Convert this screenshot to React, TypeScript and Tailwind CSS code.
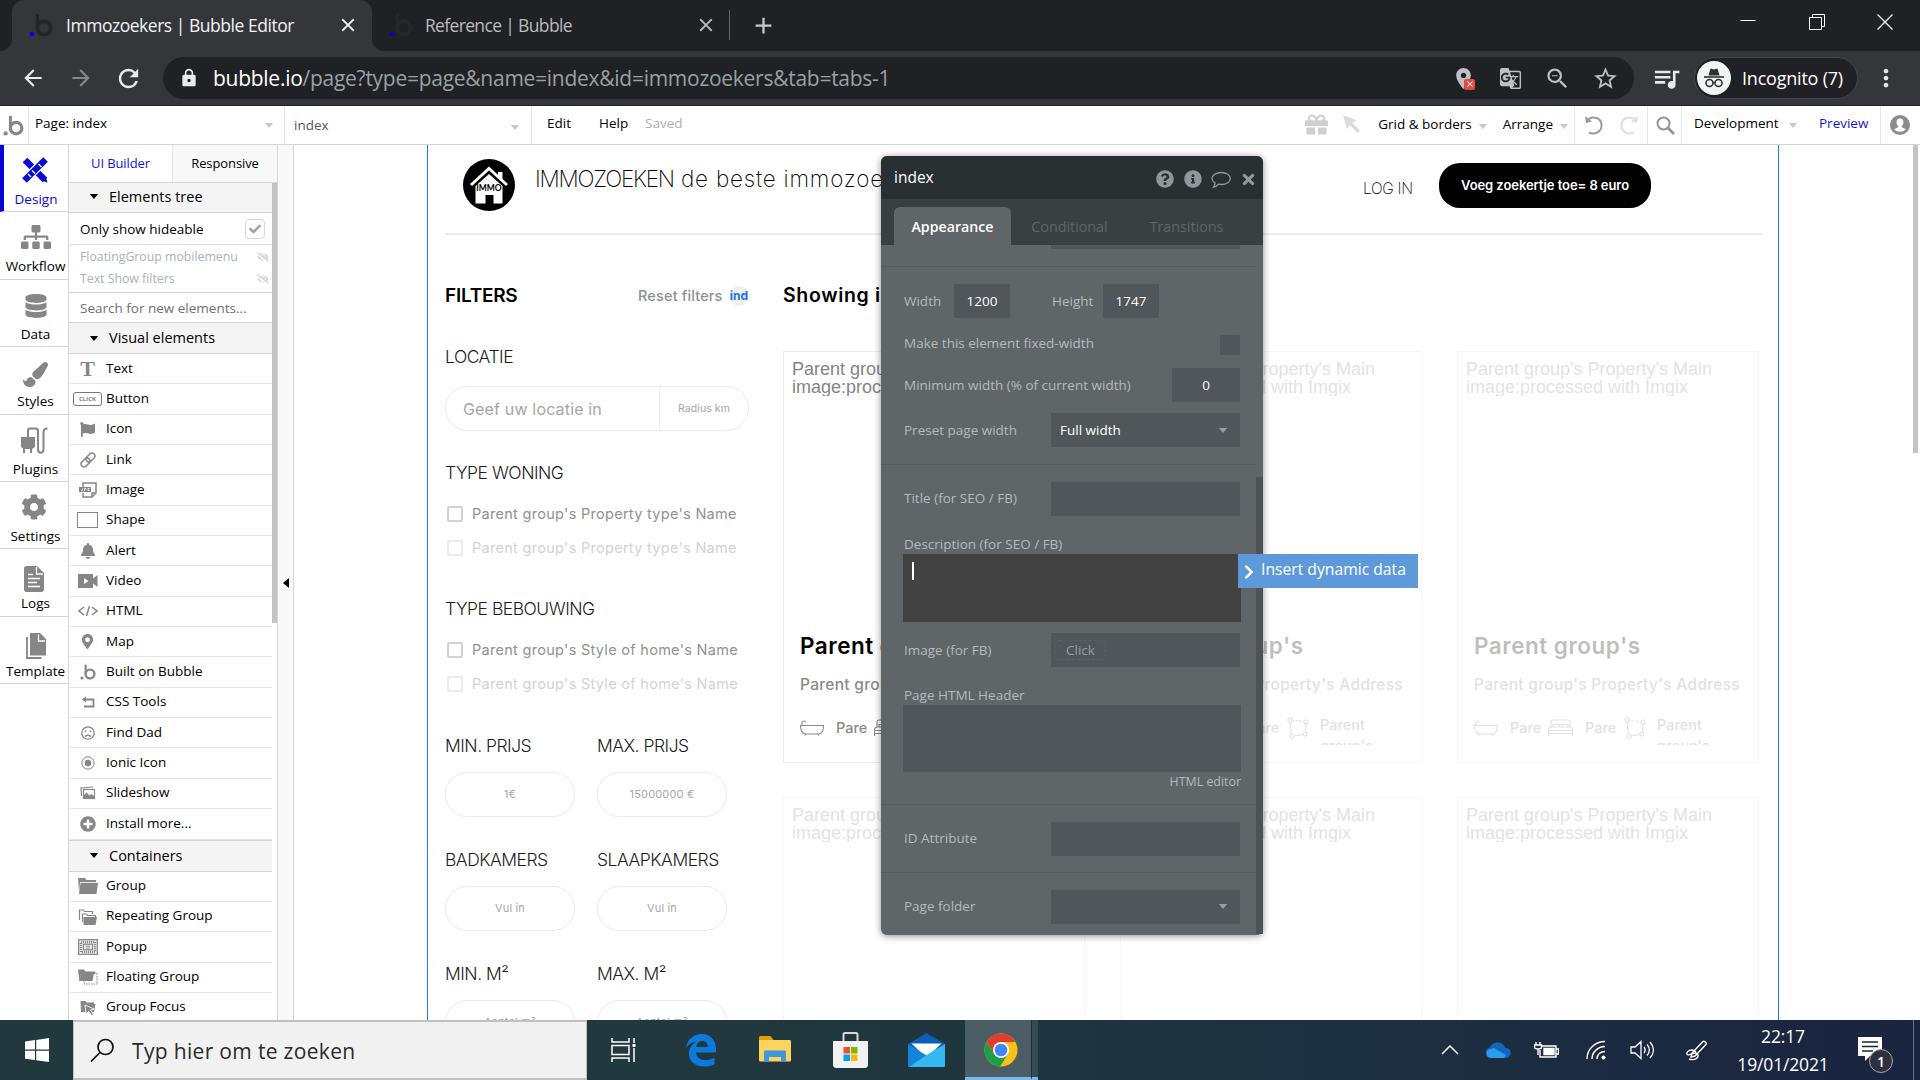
import type { ReactNode } from "react";
import { clsx } from "clsx";
import {
  FaBell,
  FaCheck,
  FaChevronRight,
  FaCog,
  FaDatabase,
  FaEyeSlash,
  FaFlag,
  FaGift,
  FaInfoCircle,
  FaMapMarkerAlt,
  FaPaintBrush,
  FaPlusCircle,
  FaQuestionCircle,
  FaSitemap,
  FaTimes,
} from "react-icons/fa";
import {
  MdAdd,
  MdArrowBack,
  MdArrowForward,
  MdClose,
  MdGTranslate,
  MdLocationOn,
  MdLock,
  MdMoreVert,
  MdOutlineZoomOut,
  MdQueueMusic,
  MdRefresh,
  MdStarBorder,
} from "react-icons/md";

function BubbleLogo({ className, dot = "currentColor" }: { className?: string; dot?: string }) {
  return (
    <svg viewBox="0 0 24 24" className={className} fill="none">
      <path d="M8.5 1v14" stroke="currentColor" strokeWidth="3.2" />
      <circle cx="15" cy="15" r="6.6" stroke="currentColor" strokeWidth="3.6" />
      <circle cx="3" cy="21" r="2.4" fill={dot} />
    </svg>
  );
}

function Caret({ className }: { className?: string }) {
  return (
    <svg viewBox="0 0 10 6" className={clsx("shrink-0", className)} fill="currentColor">
      <path d="M0 0h10L5 6z" />
    </svg>
  );
}

/* ---------- Browser ---------- */

function TabStrip() {
  return (
    <div className="flex h-[51px] bg-[#202124]">
      <div className="flex w-3 items-end bg-[#35363a]">
        <div className="h-full w-3 rounded-br-xl bg-[#202124]" />
      </div>
      <div className="flex w-[360px] items-center rounded-t-xl bg-[#35363a] pb-px pl-[17px] text-[#f1f3f4]">
        <BubbleLogo className="size-6 text-[#242424]" dot="#0000ff" />
        <span className="ml-[13px] w-[264px] whitespace-nowrap text-[17.5px] tracking-[-0.47px]">
          Immozoekers | Bubble Editor
        </span>
        <MdClose className="ml-[7px] size-[22px]" />
      </div>
      <div className="w-3 bg-[#35363a]">
        <div className="h-full rounded-bl-xl bg-[#202124]" />
      </div>
      <div className="flex w-[346px] items-center pb-px pl-[5px] text-[#b8bbbf]">
        <BubbleLogo className="size-6 text-[#26272b]" dot="#0000c8" />
        <span className="ml-3 w-[264px] whitespace-nowrap text-[17.5px] tracking-[-0.65px]">
          Reference | Bubble
        </span>
        <MdClose className="ml-[7px] size-[22px]" />
        <span className="ml-3 h-[30px] w-px bg-[#5f6368]" />
      </div>
      <div className="flex flex-1 items-center pb-px pl-[20px] text-[#c8cbce]">
        <MdAdd className="size-[27px]" />
      </div>
      <div className="flex w-[180px] items-start justify-between pr-[27px] text-white">
        <svg viewBox="0 0 16 16" className="mt-3 size-4" stroke="currentColor" fill="none">
          <path d="M0.500 8.500h15" />
        </svg>
        <svg viewBox="0 0 16 16" className="mt-3.5 size-4" stroke="currentColor" fill="none">
          <path d="M.5 3.500h12v12H.5zM3.500 3.500v-3h12v12h-3" />
        </svg>
        <svg viewBox="0 0 16 16" className="mt-3.5 size-4" stroke="currentColor" fill="none">
          <path d="M.5.5l15 15M15.500.5l-15 15" strokeWidth="1.2" />
        </svg>
      </div>
    </div>
  );
}

function IncognitoBadge() {
  return (
    <svg viewBox="0 0 34 34" className="size-[34px]">
      <circle cx="17" cy="17" r="17" fill="#f1f3f4" />
      <path d="M11.500 14.500l2-7 3.500 1 3.500-1 2 7z" fill="#303134" />
      <path d="M7 16h20" stroke="#303134" strokeWidth="1.600" />
      <g fill="none" stroke="#303134" strokeWidth="1.600">
        <circle cx="12.500" cy="22" r="3.500" />
        <circle cx="21.500" cy="22" r="3.500" />
        <path d="M16 21.500h2" />
      </g>
    </svg>
  );
}

function AddressBar() {
  return (
    <div className="flex h-[55px] items-center border-b border-[#202124] bg-[#35363a] text-[#e8eaed]">
      <MdArrowBack className="ml-5 size-[26px]" />
      <MdArrowForward className="ml-[22px] size-[26px] text-[#85878a]" />
      <MdRefresh className="ml-[20px] size-[29px]" />
      <div className="ml-5 flex h-[42px] w-[1471px] items-center rounded-full bg-[#202124] pl-4 text-[#bdc1c6]">
        <MdLock className="size-5 text-[#e8eaed]" />
        <span className="ml-3.5 flex-1 pt-0.5 whitespace-nowrap text-[21px] tracking-[-0.27px] text-[#9aa0a6]">
          <span className="text-white">bubble.io</span>
          /page?type=page&amp;name=index&amp;id=immozoekers&amp;tab=tabs-1
        </span>
        <div className="relative">
          <MdLocationOn className="size-[25px]" />
          <span className="absolute top-[13px] left-[13px] flex size-[11px] items-center justify-center rounded-[2px] bg-[#e04a3f]">
            <MdClose className="size-2.5 text-white" />
          </span>
        </div>
        <MdGTranslate className="ml-[23px] size-[23px]" />
        <MdOutlineZoomOut className="ml-[22px] size-[27px]" />
        <MdStarBorder className="mr-[15px] ml-[21px] size-[27px]" />
      </div>
      <MdQueueMusic className="ml-[17px] size-[31px]" />
      <div className="ml-[12px] flex h-[42px] w-[164px] items-center rounded-full border border-[#44464a] bg-[#202124] pl-[2px]">
        <IncognitoBadge />
        <span className="ml-[11px] text-[18px] tracking-[-0.21px] whitespace-nowrap text-white">Incognito (7)</span>
      </div>
      <MdMoreVert className="ml-[14px] size-[28px]" />
    </div>
  );
}

/* ---------- Editor top bar ---------- */

function CurvedArrow({ flip, className }: { flip?: boolean; className?: string }) {
  return (
    <svg viewBox="0 0 18 20" className={clsx("h-5 w-[18px]", flip && "-scale-x-100", className)} fill="none">
      <path d="M3 4.500C8 .5 16.500 2.500 16.500 10.500c0 7-7.500 9.500-12.500 7" stroke="currentColor" strokeWidth="2" />
      <path d="M0 1l1 7 6-1.500z" fill="currentColor" />
    </svg>
  );
}

function EditorBar() {
  return (
    <div className="flex h-[39px] items-stretch border-b border-[#d4d4d4] bg-white text-[13.5px] text-black">
      <div className="flex w-7 items-center pl-[3px] text-[#868686]">
        <BubbleLogo className="size-[21px]" />
      </div>
      <div className="flex w-[257px] items-center justify-between border-x border-[#e4e7ea] pr-2.5 pb-[3px] pl-1.5">
        Page: index
        <Caret className="mt-1 h-[5px] w-2.5 text-[#c3ccd0]" />
      </div>
      <div className="flex w-[246px] items-center justify-between pt-px pr-[11px] pl-[9px] text-[#555]">
        index
        <Caret className="mt-1 h-[5px] w-2.5 text-[#c3ccd0]" />
      </div>
      <div className="flex flex-1 items-center border-l border-[#e4e7ea] pb-[3px] pl-[15px]">
        <span className="w-[52px]">Edit</span>
        <span className="w-[46px]">Help</span>
        <span className="text-[#b0b0b0]">Saved</span>
      </div>
      <div className="flex items-center pb-0.5">
        <FaGift className="mt-px mr-[15px] size-[23px] text-[#cfcfcf]" />
        <svg viewBox="0 0 17 18" className="mr-[18px] h-[18px] w-[17px] text-[#dadada]" fill="currentColor">
          <path d="M0 0l14 5.500-5 2 8 8-2.500 2.500-8-8-2.500 4.500z" />
        </svg>
        <span className="whitespace-nowrap">Grid &amp; borders</span>
        <Caret className="mt-1 mr-[15px] ml-[6px] h-[5px] w-2.5 text-[#c3ccd0]" />
        <span>Arrange</span>
        <Caret className="mt-1 ml-[6px] h-[5px] w-2.5 text-[#c3ccd0]" />
      </div>
      <div className="ml-[5px] flex w-[74px] items-center gap-[17px] border-x border-[#e4e7ea] pl-2.5">
        <CurvedArrow className="text-[#9b9b9b]" />
        <CurvedArrow flip className="text-[#dedede]" />
      </div>
      <div className="flex w-[34px] items-center justify-center border-r border-[#e4e7ea] pl-0.5">
        <svg viewBox="0 0 19 19" className="size-[19px] text-[#929292]" fill="none" stroke="currentColor">
          <circle cx="7.500" cy="7.500" r="6" strokeWidth="2" />
          <path d="M12 12l6 6" strokeWidth="2.600" />
        </svg>
      </div>
      <div className="flex w-[199px] items-center border-r border-[#e4e7ea] pb-[3px] pl-3">
        <span className="w-[94px]">Development</span>
        <Caret className="mt-1 mr-[21px] h-[5px] w-2.5 text-[#c3ccd0]" />
        <span className="text-[#1414d2]">Preview</span>
      </div>
      <div className="flex w-[39px] items-center pl-[9px]">
        <svg viewBox="0 0 20 20" className="size-5">
          <circle cx="10" cy="10" r="10" fill="#8c8c8c" />
          <path d="M10 3.500c2.200 0 3.500 1.600 3.500 3.800 0 1.700-.8 3-1.600 3.700v1.200l4 2a8 8 0 0 1-11.800 0l4-2V11c-.9-.7-1.600-2-1.600-3.700 0-2.200 1.300-3.800 3.500-3.800z" fill="#fff" />
        </svg>
      </div>
    </div>
  );
}

/* ---------- Left navigation ---------- */

const navItems: { label: string; offset: string; icon: ReactNode }[] = [
  {
    label: "Design",
    offset: "pt-[10px]",
    icon: (
      <svg viewBox="0 0 26 26" className="mr-[3px] size-[26px]" fill="none">
        <path d="M3 3l20 20" stroke="currentColor" strokeWidth="6.500" />
        <path d="M3 23L23 3" stroke="#fff" strokeWidth="9" />
        <path d="M2.500 23.500l21-21" stroke="currentColor" strokeWidth="6.500" />
        <path d="M6 17l3 3M10 13.500l3 3M16.500 7l3 3" stroke="#fff" strokeWidth="1.300" />
        <path d="M17 15.500l7 5 1.500 5-5-1.500-6-6z" fill="currentColor" />
      </svg>
    ),
  },
  { label: "Workflow", offset: "pt-[10px]", icon: <FaSitemap className="size-[30px]" /> },
  { label: "Data", offset: "pt-[11px]", icon: <FaDatabase className="size-6" /> },
  { label: "Styles", offset: "pt-[12px]", icon: <FaPaintBrush className="size-[25px]" /> },
  {
    label: "Plugins",
    offset: "pt-[11px]",
    icon: (
      <svg viewBox="0 0 28 28" className="mr-1 size-7" fill="none">
        <path d="M1 10h14v10l-3 2H4l-3-2z" fill="currentColor" />
        <path d="M4 21v5M11 21v5M8 10V3.500C8 2 9 1.500 10 1.500h5.500c1.500 0 2.500 1 2.500 2.500v18c0 5 5.500 5 5.500 0V5c0-2 1-3.500 4-3.500" stroke="currentColor" strokeWidth="2" />
      </svg>
    ),
  },
  { label: "Settings", offset: "pt-[10px]", icon: <FaCog className="mr-[3px] size-[26px]" /> },
  {
    label: "Logs",
    offset: "pt-[15px]",
    icon: (
      <svg viewBox="0 0 20 26" className="mr-1 h-[26px] w-5">
        <path d="M0 2.500C0 1 1 0 2.500 0H13l7 7v16.500c0 1.500-1 2.500-2.500 2.500h-15C1 26 0 25 0 23.500z" fill="currentColor" />
        <path d="M12.500 1v7H19M4 8.500h5M4 12.500h12M4 16.500h9M4 20.500h12" stroke="#fff" strokeWidth="1.300" fill="none" />
      </svg>
    ),
  },
  {
    label: "Template",
    offset: "pt-[14px]",
    icon: (
      <svg viewBox="0 0 20 26" className="h-[26px] w-5">
        <path d="M4 0h10l6 6v16.500H4z" fill="currentColor" />
        <path d="M1 4v21h14.500" stroke="currentColor" strokeWidth="1.800" fill="none" />
        <path d="M12.500 1.500V8H19" stroke="#fff" strokeWidth="1.300" fill="none" />
      </svg>
    ),
  },
];

function MainNav() {
  return (
    <div className="flex w-[69px] flex-col border-r border-[#d6d6d6] bg-white">
      {navItems.map((item, i) => (
        <div
          key={item.label}
          className={clsx(
            "flex h-[67.4px] flex-col items-center border-b border-[#d6d6d6] text-[13.500px] whitespace-nowrap",
            i === 0 ? "border-l-4 border-l-[#0606d6] text-[#0b0bd6]" : "pl-[3px] text-black",
          )}
        >
          <div className={clsx("flex h-[44px] flex-col", item.offset, i > 0 && "text-[#868686]")}>
            <div className="flex h-[30px] shrink-0 items-center">{item.icon}</div>
          </div>
          <span className="leading-5">{item.label}</span>
        </div>
      ))}
    </div>
  );
}

/* ---------- Element palette ---------- */

function Glyph({ children }: { children: ReactNode }) {
  return (
    <svg viewBox="0 0 20 18" className="h-[18px] w-5" fill="none" stroke="currentColor" strokeWidth="1.500">
      {children}
    </svg>
  );
}

const visualElements: { label: string; icon: ReactNode }[] = [
  { label: "Text", icon: <span className="font-['Liberation_Serif',serif] text-[22px] leading-none font-bold">T</span> },
  {
    label: "Button",
    icon: (
      <span className="flex h-3.5 w-[29px] items-center justify-center rounded-[3px] border border-[#777] text-[6px] font-bold">
        CLICK
      </span>
    ),
  },
  { label: "Icon", icon: <FaFlag className="size-[15px]" /> },
  {
    label: "Link",
    icon: (
      <Glyph>
        <g transform="rotate(-45 10 9)">
          <rect x="1.500" y="6" width="10" height="6" rx="3" />
          <rect x="8.500" y="6" width="10" height="6" rx="3" />
        </g>
      </Glyph>
    ),
  },
  {
    label: "Image",
    icon: (
      <Glyph>
        <path d="M5 6V2h13v10l-4 4H5v-4" />
        <path d="M14 16v-4h4" />
        <path d="M1 6h12v5H1z" fill="currentColor" stroke="none" />
        <path d="M3 9.500h1.500V7.500M6.500 10V7.500h1.500v1M10 7.500h1.500M10 7.500v2h1.500" stroke="#fff" strokeWidth=".8" />
      </Glyph>
    ),
  },
  { label: "Shape", icon: <span className="h-4 w-[21px] border-[1.500px] border-[#868686]" /> },
  { label: "Alert", icon: <FaBell className="size-4" /> },
  {
    label: "Video",
    icon: (
      <Glyph>
        <path d="M0 2h15v4.500L19.500 3v12L15 11.500V16H0z" fill="currentColor" stroke="none" />
        <path d="M6 6v6l4.500-3z" fill="#fff" stroke="none" />
      </Glyph>
    ),
  },
  {
    label: "HTML",
    icon: (
      <Glyph>
        <path d="M6 5L1 9l5 4M14 5l5 4-5 4M11.500 4l-3 10" />
      </Glyph>
    ),
  },
  { label: "Map", icon: <FaMapMarkerAlt className="size-[15px]" /> },
  { label: "Built on Bubble", icon: <BubbleLogo className="size-4" /> },
  {
    label: "CSS Tools",
    icon: (
      <Glyph>
        <path d="M5 6.500h10.500v7H6" strokeWidth="1.800" />
        <path d="M4 6.500l4-3v6z" fill="currentColor" stroke="none" />
      </Glyph>
    ),
  },
  {
    label: "Find Dad",
    icon: (
      <Glyph>
        <circle cx="10" cy="9" r="6.200" strokeWidth="1.300" />
        <path d="M7.500 6.500v1.500M12.500 6.500v1.500M7 12.500c1.500-1.800 4.500-1.800 6 0" />
      </Glyph>
    ),
  },
  {
    label: "Ionic Icon",
    icon: (
      <Glyph>
        <circle cx="10" cy="9" r="6.200" strokeWidth="1" />
        <circle cx="10" cy="9" r="3.200" fill="currentColor" stroke="none" />
      </Glyph>
    ),
  },
  {
    label: "Slideshow",
    icon: (
      <Glyph>
        <path d="M3.500 12L3 4l12-1" strokeWidth="1.200" />
        <rect x="5.500" y="5.500" width="11" height="9" strokeWidth="1.200" />
        <path d="M5.500 14.500v-3l3-3 3 3 2-1.500 3 2.500v2z" fill="currentColor" stroke="none" />
      </Glyph>
    ),
  },
  { label: "Install more...", icon: <FaPlusCircle className="size-4" /> },
];

const containers: { label: string; icon: ReactNode }[] = [
  {
    label: "Group",
    icon: (
      <Glyph>
        <path d="M0 1h7l1.500 2H18v3H2L1 15z" fill="currentColor" stroke="none" />
        <path d="M2.500 6H20l-1.500 11H1z" fill="currentColor" stroke="none" />
        <path d="M2 5.500h16" stroke="#fff" strokeWidth=".8" />
      </Glyph>
    ),
  },
  {
    label: "Repeating Group",
    icon: (
      <Glyph>
        <path d="M1.500 12V2h4l1 1.500h8V6" strokeWidth="1.200" />
        <path d="M4.500 14V6h4l1 1.500h8V9" strokeWidth="1.200" />
        <path d="M5.500 9H19l-1.500 8h-12z" fill="currentColor" stroke="none" />
      </Glyph>
    ),
  },
  {
    label: "Popup",
    icon: (
      <Glyph>
        <rect x=".7" y="1.700" width="18.600" height="14.600" strokeWidth="1.300" />
        <rect x="3" y="4" width="14" height="10" strokeWidth="2.500" strokeDasharray="1.200 .8" />
        <rect x="5.500" y="6.200" width="9" height="5.600" strokeWidth="1.300" fill="#fff" />
        <path d="M7.500 8.200h5M7.500 10h5" strokeWidth="1" />
      </Glyph>
    ),
  },
  {
    label: "Floating Group",
    icon: (
      <Glyph>
        <path d="M0 1.500h6l1.500 2H17V6H3L1.500 14z" fill="currentColor" stroke="none" />
        <path d="M3 5h13l-1.500 8H1.500z" fill="currentColor" stroke="none" />
        <path d="M17 5h2v11H6v-2.500" strokeWidth="1" strokeDasharray="1.500 1" />
      </Glyph>
    ),
  },
  {
    label: "Group Focus",
    icon: (
      <Glyph>
        <path d="M2.500 2h5l1 1.500H16V5h1.500L16 13H3z" fill="currentColor" stroke="none" />
        <path d="M7 6l9 4-3.500 1 3 4.500-1.800 1.300-3-4.500L8 15z" fill="currentColor" stroke="#fff" strokeWidth=".9" />
      </Glyph>
    ),
  },
];

function SectionHeader({ children, className }: { children: ReactNode; className?: string }) {
  return (
    <div className={clsx("flex w-[203px] shrink-0 items-center border-b border-[#d6d6d6] bg-[#f4f4f4] pl-5 text-[14.5px]", className)}>
      <Caret className="h-[5px] w-2.5 text-black" />
      <span className="ml-2.5">{children}</span>
    </div>
  );
}

function PaletteRow({ label, icon }: { label: string; icon: ReactNode }) {
  return (
    <div className="flex h-[30.35px] w-[203px] shrink-0 items-center border-b border-[#e6e6e6]">
      <span className="flex w-[37px] shrink-0 items-center justify-center text-[#868686]">{icon}</span>
      <span className="pb-0.5 whitespace-nowrap">{label}</span>
    </div>
  );
}

function Palette() {
  return (
    <div className="flex w-[209px] flex-col overflow-hidden border-r border-[#d6d6d6] bg-white text-[13.500px] text-black">
      <div className="flex h-[38px] shrink-0 border-b border-[#d6d6d6] text-[13px] tracking-[-0.1px]">
        <div className="flex w-[103px] items-center justify-center text-[#1414d2]">UI Builder</div>
        <div className="flex flex-1 items-center justify-center border-l border-[#e6e6e6] bg-[#f8f8f8]">Responsive</div>
      </div>
      <div className="relative flex flex-1 flex-col">
        <SectionHeader className="h-[30px] pb-0.5">Elements tree</SectionHeader>
        <div className="flex h-8 w-[203px] shrink-0 items-center justify-between border-b border-[#e0e0e0] pt-px pr-[7px] pl-[11px]">
          Only show hideable
          <span className="flex size-5 items-center justify-center rounded border border-[#d6d6d6] text-[#9ba3a7]">
            <FaCheck className="size-3" />
          </span>
        </div>
        <div className="flex h-12 w-[203px] shrink-0 flex-col border-b border-[#d6d6d6] pt-[1px] pr-[3px] pl-[11px] text-[12.3px] text-[#a9b2b6]">
          {["FloatingGroup mobilemenu", "Text Show filters"].map((name) => (
            <div key={name} className="flex h-[22px] items-center justify-between">
              {name}
              <FaEyeSlash className="size-3 text-[#d2d2d2]" />
            </div>
          ))}
        </div>
        <div className="flex h-[30px] w-[203px] shrink-0 items-center border-b border-[#d6d6d6] pt-px pl-[11px] text-[#707070]">
          Search for new elements...
        </div>
        <SectionHeader className="h-[31px]">Visual elements</SectionHeader>
        {visualElements.map((el) => (
          <PaletteRow key={el.label} {...el} />
        ))}
        <SectionHeader className="h-8 border-t">Containers</SectionHeader>
        {containers.map((el) => (
          <PaletteRow key={el.label} {...el} />
        ))}
        <div className="absolute top-0 right-0 h-[440px] w-[5px] bg-[#c4c4c4]" />
      </div>
    </div>
  );
}

/* ---------- Page canvas ---------- */

function Heading({ children, className }: { children: ReactNode; className?: string }) {
  return (
    <div className={clsx("text-[17.500px] leading-6 font-light tracking-[-0.500px] whitespace-nowrap text-[#1c1c1c]", className)}>
      {children}
    </div>
  );
}

function CheckRow({ label, faded }: { label: string; faded?: boolean }) {
  return (
    <div className={clsx("flex h-[34px] items-center pl-0.5", faded && "opacity-40")}>
      <span className="size-4 shrink-0 rounded-[2px] border-2 border-[#d2d2d2]" />
      <span className="ml-[9px] text-[14.5px] tracking-[0.290px] whitespace-nowrap text-[#919191]">{label}</span>
    </div>
  );
}

function PillInput({ label, placeholder }: { label: string; placeholder: string }) {
  return (
    <div className="w-[152px]">
      <Heading>{label}</Heading>
      <div className="mt-[14px] flex h-[45px] w-[130px] items-center justify-center rounded-[22px] border border-[#ebebeb] text-[11px] tracking-[0.170px] text-[#a6a6a6]">
        {placeholder}
      </div>
    </div>
  );
}

function Filters() {
  return (
    <div className="w-[338px] shrink-0 pt-[47px]">
      <div className="flex h-[28px] items-center">
        <span className="w-[193px] text-[19px] font-semibold tracking-[-0.25px] text-black">FILTERS</span>
        <span className="w-[91px] text-[14.500px] font-medium tracking-[0.150px] whitespace-nowrap text-[#8f8f8f]">Reset filters</span>
        <span className="flex size-5 items-center justify-center rounded-full bg-[#efefef] text-[12px] font-bold text-[#1f74e8]">
          ind
        </span>
      </div>
      <Heading className="mt-[35px]">LOCATIE</Heading>
      <div className="mt-[17px] flex h-[45px] w-[304px] items-center rounded-[22px] border border-[#ebebeb] text-[#a6a6a6]">
        <span className="flex h-full w-[214px] items-center border-r border-[#ebebeb] pl-[17px] text-[16px] tracking-[0.160px]">
          Geef uw locatie in
        </span>
        <span className="flex-1 text-center text-[10.500px] tracking-[0.080px]">Radius km</span>
      </div>
      <Heading className="mt-[30px]">TYPE WONING</Heading>
      <div className="mt-3">
        <CheckRow label="Parent group's Property type's Name" />
        <CheckRow faded label="Parent group's Property type's Name" />
      </div>
      <Heading className="mt-[32px]">TYPE BEBOUWING</Heading>
      <div className="mt-3">
        <CheckRow label="Parent group's Style of home's Name" />
        <CheckRow faded label="Parent group's Style of home's Name" />
      </div>
      <div className="mt-[33px] flex flex-wrap gap-y-[31px]">
        <PillInput label="MIN. PRIJS" placeholder="1€" />
        <PillInput label="MAX. PRIJS" placeholder="15000000 €" />
        <PillInput label="BADKAMERS" placeholder="Vul in" />
        <PillInput label="SLAAPKAMERS" placeholder="Vul in" />
        <PillInput label="MIN. M²" placeholder="Aantal m²" />
        <PillInput label="MAX. M²" placeholder="Aantal m²" />
      </div>
    </div>
  );
}

function PropertyCard({ tone }: { tone: "solid" | "faded" | "ghost" }) {
  return (
    <div
      className={clsx(
        "h-[412px] w-[302px] shrink-0 border px-2 pt-2",
        tone === "solid" ? "border-[#ebebeb]" : "border-[#f6f6f6]",
      )}
    >
      <div
        className={clsx(
          "h-9 overflow-hidden font-['Liberation_Sans',Arial,sans-serif] text-[18px] leading-[18px]",
          tone === "solid" ? "text-[#858585]" : "text-[#e3e3e3]",
        )}
      >
        Parent group's Property's Main image:processed with Imgix
      </div>
      {tone !== "ghost" && (
        <div className={clsx("pl-2", tone === "faded" && "opacity-25")}>
          <div className="mt-[233px] text-[22.500px] leading-[34px] font-semibold tracking-[0.5px] text-black">Parent group's</div>
          <div className="mt-[10px] text-[15.500px] leading-6 font-medium tracking-[0.300px] whitespace-nowrap text-[#8a8a8a]">
            Parent group's Property's Address
          </div>
          <div className="mt-[15px] flex h-[31px] items-center text-[14.500px] text-[#8a8a8a]">
            <svg viewBox="0 0 24 16" className="h-4 w-6" fill="none" stroke="currentColor" strokeWidth="1.100">
              <path d="M.5 5.500h23c0 5-2 8.500-5 8.500h-13c-3 0-5-3.500-5-8.500zM2 5.500V2.500c0-2 3.500-2 3.500 0M6 14l-1 1.500M18 14l1 1.500" />
            </svg>
            <span className="ml-3 w-[38px] font-medium">Pare</span>
            <svg viewBox="0 0 25 18" className="h-[18px] w-[25px]" fill="none" stroke="currentColor" strokeWidth="1.100">
              <path d="M3 8V3c0-1.500 1-2 2-2h15c1 0 2 .5 2 2v5M.5 17v-6c0-2 1-3 3-3h18c2 0 3 1 3 3v6M.5 14.500h24M.5 11.500h24M5 8V5.500h6.500V8M13.500 8V5.500H20V8" />
            </svg>
            <span className="ml-3 w-[39px] font-medium">Pare</span>
            <svg viewBox="0 0 22 22" className="size-[22px]" fill="none" stroke="currentColor" strokeWidth="1.100">
              <circle cx="3" cy="3" r="2" />
              <circle cx="19" cy="5" r="2" />
              <circle cx="18" cy="17" r="2" />
              <circle cx="5" cy="19.500" r="2" />
              <path d="M3 5l1.500 12.500M7 19l9-1.500M18.500 15l.5-8" />
              <path d="M5 3l12 1.500" strokeDasharray="2 1.500" />
            </svg>
            <span className="ml-[11px] h-[34px] w-[60px] overflow-hidden pt-[3px] leading-[21px] font-medium">Parent group's</span>
          </div>
        </div>
      )}
    </div>
  );
}

function HouseLogo() {
  return (
    <svg viewBox="0 0 52 52" className="size-[52px]">
      <circle cx="26" cy="26" r="26" fill="#000" />
      <path d="M35 13h4.500v8L35 17z" fill="#fff" />
      <path d="M8 26L26 9.500 44 26" fill="none" stroke="#fff" strokeWidth="3" />
      <path d="M12.500 27L26 15l13.500 12v17.500h-9V36h-8v8.500h-10z" fill="#fff" />
      <text x="26" y="32" textAnchor="middle" fontSize="8.500" fontWeight="700" fill="#000" fontFamily="Lato, sans-serif">
        IMMO
      </text>
    </svg>
  );
}

function PageCanvas() {
  return (
    <div className="relative flex flex-1 overflow-hidden bg-white pl-[133px] font-[Inter,sans-serif]">
      <div className="w-[1352px] shrink-0 border-x-[1.500px] border-[#1f7fd0] pl-[17px]">
        <div className="flex h-[90px] w-[1317px] border-b-2 border-[#ebebeb] pt-[14px] pl-[18px]">
          <HouseLogo />
          <span className="mt-0.5 ml-5 w-[828px] text-[22.500px] leading-9 font-extralight tracking-[0.800px] whitespace-nowrap text-black">
            <span className="tracking-[-1.200px]">IMMOZOEKEN</span> de beste immozoe
          </span>
          <span className="mt-[18px] w-[76px] text-[15.500px] leading-6 font-extralight tracking-[-0.300px] text-black">LOG IN</span>
          <span className="mt-1 flex h-[45px] w-[212px] items-center justify-center rounded-[21px] bg-black text-[13px] font-semibold tracking-[-0.070px] text-white">
            Voeg zoekertje toe= 8 euro
          </span>
        </div>
        <div className="flex">
          <Filters />
          <div className="shrink-0 pt-[46px]">
            <div className="text-[19.5px] leading-7 font-semibold tracking-[0.650px] text-black">Showing i</div>
            <div className="mt-[42px] flex w-[980px] flex-wrap gap-x-[35px] gap-y-[34px]">
              <PropertyCard tone="solid" />
              <PropertyCard tone="faded" />
              <PropertyCard tone="faded" />
              <PropertyCard tone="ghost" />
              <PropertyCard tone="ghost" />
              <PropertyCard tone="ghost" />
            </div>
          </div>
        </div>
      </div>
      <div className="absolute top-0 right-[2px] h-[308px] w-[5px] bg-[#c4c4c4]" />
    </div>
  );
}

/* ---------- Property editor window ---------- */

function Field({ className, children }: { className?: string; children?: ReactNode }) {
  return (
    <div className={clsx("flex h-[34px] items-center rounded-[1px] bg-[#505659] text-white", className)}>{children}</div>
  );
}

function PropertyEditor() {
  return (
    <div className="absolute top-[156px] left-[881px] h-[779px] w-[382px] rounded-md bg-[#606568] text-[13.500px] text-[#b3bbbe] shadow-[0_1px_7px_rgba(0,0,0,0.450)]">
      <div className="flex h-[43px] items-center rounded-t-md bg-[#293032] pr-[6px] pl-[13px] text-[#8f989b]">
        <span className="flex-1 text-[15.5px] font-medium text-white">index</span>
        <FaQuestionCircle className="mt-0.5 size-[18px]" />
        <FaInfoCircle className="mt-0.5 ml-2.5 size-[18px]" />
        <svg viewBox="0 0 20 18" className="mt-1 ml-[9px] h-[18px] w-5" fill="none" stroke="currentColor" strokeWidth="1.300">
          <path d="M10.500 1.500c5 0 8.800 2.600 8.800 6s-3.800 6-8.800 6c-1 0-2-.1-3-.4-1.200 1.600-2.800 2.700-5 3 1-1.200 1.600-2.500 1.600-4C2.500 11 1 9.400 1 7.500c0-3.400 4-6 9.500-6z" />
        </svg>
        <FaTimes className="mt-[3px] ml-[9px] size-[17px]" />
      </div>
      <div className="flex h-[46px] items-end bg-[#3a3f41] pl-[13px] text-[14.300px] text-[#606568]">
        <span className="flex h-[38px] w-[117px] items-center justify-center rounded-t-md bg-[#606568] pt-px text-[14.200px] font-semibold text-white">
          Appearance
        </span>
        <span className="flex h-[38px] w-[117px] items-center justify-center pt-px">Conditional</span>
        <span className="flex h-[38px] w-[117px] items-center justify-center pt-px">Transitions</span>
      </div>
      <div className="flex">
        <div className="w-[375px]">
          <div className="flex h-[22px] justify-end border-b border-[#565b5e] pr-4">
            <div className="h-1 w-[189px] bg-[#505659]" />
          </div>
          <div className="flex flex-col gap-[11px] pt-[17px] pr-4 pl-[23px]">
            <div className="flex items-center">
              <span className="w-[50px]">Width</span>
              <Field className="w-14 justify-center">1200</Field>
              <span className="ml-[42px] w-[51px]">Height</span>
              <Field className="w-14 justify-center">1747</Field>
            </div>
            <div className="flex h-[28px] items-center justify-between">
              Make this element fixed-width
              <div className="mt-[3px] size-5 rounded-[1px] bg-[#505659]" />
            </div>
            <div className="flex items-center justify-between">
              Minimum width (% of current width)
              <Field className="w-[68px] justify-center">0</Field>
            </div>
            <div className="flex items-center justify-between">
              Preset page width
              <Field className="w-[189px] justify-between pr-3 pl-[9px]">
                Full width
                <Caret className="h-[5px] w-2.5 text-[#979fa2]" />
              </Field>
            </div>
          </div>
          <div className="mt-[17px] flex h-[68px] items-center justify-between border-t border-[#565b5e] pr-4 pl-[23px]">
            Title (for SEO / FB)
            <Field className="w-[189px]" />
          </div>
          <div className="pr-[15px] pl-[22px]">
            <div className="flex h-[22px] items-center pt-0.5 pl-px">Description (for SEO / FB)</div>
            <div className="relative h-[68px] bg-[#424242]">
              <span className="absolute top-2 left-[9px] h-[18px] w-[1.500px] bg-white" />
              <div className="absolute top-0 left-[335px] flex h-[34px] w-[180px] items-center bg-[#5e9ad9] pb-[3px] pl-1.5 text-[15.7px] font-medium whitespace-nowrap text-white">
                <FaChevronRight className="mt-1 mr-[7px] h-4 w-2.5" />
                Insert dynamic data
              </div>
            </div>
            <div className="mt-[11px] flex items-center justify-between pr-px pl-px">
              Image (for FB)
              <Field className="w-[189px] pl-1">
                <span className="flex h-5 w-[51px] items-center justify-center rounded border border-dashed border-[#5b6163] text-[13.5px] text-[#969d9f]">
                  Click
                </span>
              </Field>
            </div>
            <div className="flex h-[38px] items-end pl-px leading-5">Page HTML Header</div>
            <div className="h-[67px] bg-[#505659]" />
            <div className="flex h-5 items-center justify-end text-[12.4px]">HTML editor</div>
          </div>
          <div className="mt-3 flex h-[68px] items-center justify-between border-t border-[#565b5e] pr-4 pl-[23px]">
            ID Attribute
            <Field className="w-[189px]" />
          </div>
          <div className="flex h-[68px] items-center justify-between border-t border-[#565b5e] pr-4 pl-[23px]">
            Page folder
            <Field className="w-[189px] justify-end pr-3">
              <Caret className="h-[5px] w-2.5 text-[#979fa2]" />
            </Field>
          </div>
        </div>
        <div className="mt-[232px] h-[457px] w-[7px] bg-[#4e5357]" />
      </div>
    </div>
  );
}

/* ---------- Windows taskbar ---------- */

function Taskbar() {
  return (
    <div className="flex h-[60px] items-center bg-linear-to-r from-[#20383e] from-40% via-[#1d3040] via-70% to-[#1a2440] text-white">
      <div className="flex w-[73px] justify-center">
        <svg viewBox="0 0 24 24" className="size-6" fill="currentColor">
          <path d="M0 3.500l10-1.400v9.400H0zM11.200 2L24 0v11.500H11.200zM0 12.700h10v9.400L0 20.700zM11.200 12.700H24V24l-12.800-1.800z" />
        </svg>
      </div>
      <div className="flex h-[60px] w-[514px] items-center border border-y-2 border-[#c0c0c0] bg-[#f1f1f1] pl-4 text-[#2a2a2a]">
        <svg viewBox="0 0 25 25" className="size-[25px]" fill="none" stroke="#111" strokeWidth="1.700">
          <circle cx="15.500" cy="9" r="7.500" />
          <path d="M10 14.500L1 23.500" />
        </svg>
        <span className="mt-1 ml-[17px] text-[21px] tracking-[0.330px]">Typ hier om te zoeken</span>
      </div>
      <svg viewBox="0 0 26 24" className="ml-6 h-6 w-[26px]" fill="none" stroke="currentColor" strokeWidth="1.500">
        <path d="M1 0v4h17V0M1 24v-4h17v4M1 7.500h17v9H1zM23 0v5M23 10v14" />
        <path d="M21.500 6h3v3h-3z" fill="currentColor" stroke="none" />
      </svg>
      {/* Edge */}
      <svg viewBox="0 0 32 34" className="ml-[48px] h-[34px] w-8">
        <path d="M1 15C2.500 6 9 1 16.500 1 26 1 31 8 31 16v3.500H11c.3 5 4.500 7.500 9.500 7.500 3.500 0 6.500-.8 9-2.300v6.500C26.500 33 23 33.500 19 33.500 9.500 33.500 4 28 4 20.500c0-5.500 3-9.500 7.500-12C6.500 9 3 11.500 1 15zM11.300 14h11.500c0-4-2-6-5.500-6s-5.500 2.500-6 6z" fill="#0a7bdc" />
      </svg>
      {/* Explorer */}
      <svg viewBox="0 0 32 28" className="ml-[42px] h-7 w-8">
        <path d="M0 1.500C0 .5.500 0 1.500 0h10l3 4H0z" fill="#e0a10c" />
        <path d="M0 4h30.500c1 0 1.500.5 1.500 1.500V24c0 1-.5 1.500-1.500 1.500h-29C.5 25.500 0 25 0 24z" fill="#fbd35e" />
        <path d="M5 26V16c0-1 .5-1.500 1.500-1.500h19c1 0 1.500.5 1.500 1.500v10h-5v-5H10v5z" fill="#3d97d8" />
      </svg>
      {/* Store */}
      <svg viewBox="0 0 35 36" className="ml-[42px] h-9 w-[35px]">
        <path d="M10.500 10V2.500c0-1 .5-1.500 1.500-1.500h11c1 0 1.500.5 1.500 1.500V10" fill="none" stroke="#d8d8d8" strokeWidth="2" />
        <path d="M0 9h35v24c0 1.500-1 3-3 3H3c-2 0-3-1.500-3-3z" fill="#f2f2f2" />
        <path d="M10.500 15h6.500v6.500h-6.500z" fill="#f25022" />
        <path d="M18 15h6.500v6.500H18z" fill="#7fba00" />
        <path d="M10.500 22.500h6.500V29h-6.500z" fill="#00a4ef" />
        <path d="M18 22.500h6.500V29H18z" fill="#ffb900" />
      </svg>
      {/* Mail */}
      <svg viewBox="0 0 37 34" className="ml-10 h-[34px] w-[37px]">
        <path d="M0 11L18.500 0 37 11v10H0z" fill="#0a5fb4" />
        <path d="M3.500 10.500h30L18.500 25z" fill="#fff" />
        <path d="M0 11l37 23H1.500C.5 34 0 33.500 0 32.500z" fill="#1683d8" />
        <path d="M37 11v21.500c0 1-.5 1.500-1.500 1.500H1L18.500 22z" fill="#35b8f1" />
      </svg>
      <div className="ml-5 flex h-[60px] w-[66px] items-center justify-center border-b-[3px] border-[#76b9ed] bg-[#4b5e66] pt-[3px] pl-[6px]">
        {/* Chrome */}
        <svg viewBox="0 0 34 34" className="size-[34px]">
          <circle cx="17" cy="17" r="16.500" fill="#fbc116" />
          <path d="M2.700 8.700A16.500 16.500 0 0 0 16 33.500L24 21l-7-4-7 4z" fill="#1a9f4b" />
          <path d="M2.700 8.700L10 21l7-12h14.300A16.500 16.500 0 0 0 2.700 8.700z" fill="#e33b2e" />
          <circle cx="17" cy="17" r="8" fill="#fff" />
          <circle cx="17" cy="17" r="6.300" fill="#4285f4" />
        </svg>
      </div>
      <div className="h-[60px] w-[7px] border-b-[3px] border-l border-[#76b9ed] border-l-[#202c31] bg-[#364a52]" />
      <div className="flex flex-1 items-center justify-end">
        <svg viewBox="0 0 18 10" className="h-2.5 w-[18px]" fill="none" stroke="currentColor" strokeWidth="1.500">
          <path d="M1 9l8-8 8 8" />
        </svg>
        <svg viewBox="0 0 26 16" className="ml-[26px] h-4 w-[26px]">
          <path d="M5.500 16A5.500 5.500 0 0 1 5 5.200 8.500 8.500 0 0 1 20.500 6 5 5 0 0 1 21 16z" fill="#1067bd" />
          <path d="M6 16a4.500 4.500 0 0 1-2-8.500L9 6l12 7-2 3z" fill="#2a9df0" />
        </svg>
        <svg viewBox="0 0 25 18" className="ml-[23px] h-[18px] w-[25px]" fill="none" stroke="currentColor" strokeWidth="1.400">
          <path d="M8 5h14v11H6V9M22 8h2.500v5H22" />
          <path d="M10 7.500h10v6H10z" fill="currentColor" />
          <path d="M2 1v3M6 1v3M.5 4h7v2.500c0 2-7 2-7 0zM4 8v6" />
        </svg>
        <svg viewBox="0 0 20 20" className="ml-[27px] size-5" fill="none" stroke="currentColor" strokeWidth="1.400">
          <path d="M1 19C1 9 9 1.500 19 1.500M6 19c0-7 6-12.500 13-12.500M11 19c0-4.500 3.500-7.500 8-7.500" />
          <circle cx="17.500" cy="17.500" r="2" fill="currentColor" stroke="none" />
        </svg>
        <svg viewBox="0 0 24 20" className="ml-[24px] h-5 w-6" fill="none" stroke="currentColor" strokeWidth="1.300">
          <path d="M1 7h4l6-5.500v17L5 13H1zM14 7c1.500 2 1.500 4 0 6M17 4.500c3 3.500 3 7.500 0 11M20 2c4.500 5 4.500 11 0 16" />
        </svg>
        <svg viewBox="0 0 22 22" className="ml-[32px] size-[22px]" fill="none" stroke="currentColor" strokeWidth="1.400">
          <path d="M6 14L17 2.500c1-1 4 1.500 3 3L9 17l-4 1zM10 13c-4-4-10-1-9 2 1 2.500 5-1 8-1s4 3 2 5-6 2-8 1" />
        </svg>
        <div className="ml-[29px] flex w-[92px] flex-col items-center text-[17.500px] leading-7 tracking-[-0.150px]">
          <span>22:17</span>
          <span>19/01/2021</span>
        </div>
        <div className="relative ml-[29px] h-[30px] w-[35px]">
          <svg viewBox="0 0 24 24" className="mt-0.5 size-6">
            <path d="M0 0h24v19H12l-5 5v-5H0z" fill="#fff" />
            <path d="M4 5h16M4 9.500h16M4 14h11" stroke="#1a2440" strokeWidth="1.600" />
          </svg>
          <span className="absolute top-[14px] left-[11px] flex size-6 items-center justify-center rounded-full border border-[#a5a8ad] bg-[#2c313d] text-[14px] font-semibold">
            1
          </span>
        </div>
        <div className="mr-1.5 ml-5 h-[60px] w-px bg-[#6b7284]" />
      </div>
    </div>
  );
}

export default function App() {
  return (
    <div className="flex h-[1080px] w-[1920px] flex-col overflow-hidden font-['Open_Sans','Noto_Sans',sans-serif]">
      <TabStrip />
      <AddressBar />
      <EditorBar />
      <div className="flex h-[875px] overflow-hidden">
        <MainNav />
        <Palette />
        <div className="flex w-4 items-center justify-center border-r border-[#d6d6d6] bg-[#f8f8f8]">
          <svg viewBox="0 0 6 10" className="h-2.5 w-1.5">
            <path d="M6 0v10L0 5z" />
          </svg>
        </div>
        <PageCanvas />
      </div>
      <Taskbar />
      <PropertyEditor />
    </div>
  );
}
